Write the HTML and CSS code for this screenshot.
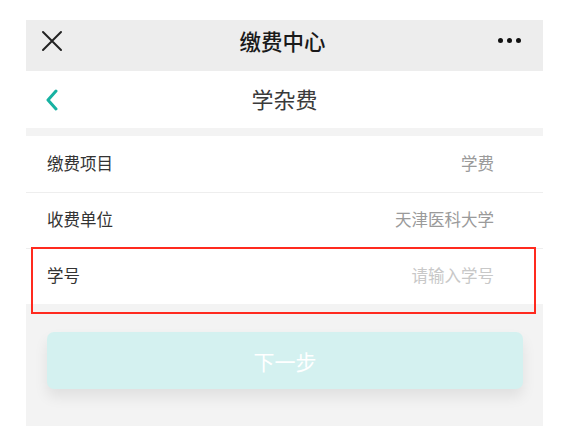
FILE: index.html
```html
<!DOCTYPE html>
<html lang="zh">
<head>
<meta charset="utf-8">
<title>缴费中心</title>
<link rel="stylesheet" href="styles.css">
</head>
<body>
<div class="page">
  <div class="topbar">
    <svg class="close" width="22" height="22" viewBox="0 0 22 22"><path d="M2 2 L20 20 M20 2 L2 20" stroke="#222" stroke-width="2" fill="none" stroke-linecap="round"/></svg>
    <div class="topbar-title">缴费中心</div>
    <div class="dots"><span></span><span></span><span></span></div>
  </div>
  <div class="subnav">
    <svg class="back" width="14" height="22" viewBox="0 0 14 22"><path d="M11 2 L3 11 L11 20" stroke="#17b2a2" stroke-width="3" fill="none" stroke-linecap="round" stroke-linejoin="round"/></svg>
    <div class="subnav-title">学杂费</div>
  </div>
  <div class="list">
    <div class="row">
      <span class="label">缴费项目</span>
      <span class="value">学费</span>
    </div>
    <div class="row">
      <span class="label">收费单位</span>
      <span class="value">天津医科大学</span>
    </div>
    <div class="row row-marked">
      <span class="label">学号</span>
      <span class="value placeholder">请输入学号</span>
    </div>
  </div>
  <div class="actions">
    <button class="next">下一步</button>
  </div>
</div>
</body>
</html>
```

FILE: styles.css
```css
* { box-sizing: border-box; }
body {
  margin: 0;
  background: #ffffff;
  font-family: "Noto Sans CJK SC", "Noto Sans", sans-serif;
}
.page {
  margin: 20px 21px 11px 26px;
  background: #f3f3f3;
}
.topbar {
  height: 51px;
  background: #ededed;
  display: flex;
  align-items: center;
  justify-content: space-between;
  padding: 0 22px 10px 15px;
}
.topbar-title {
  font-size: 21.5px;
  font-weight: 500;
  color: #1a1a1a;
  margin-left: 4px;
}
.dots {
  display: flex;
  gap: 4px;
}
.dots span {
  width: 5px;
  height: 5px;
  border-radius: 50%;
  background: #111;
}
.subnav {
  height: 57px;
  background: #fff;
  display: flex;
  align-items: center;
  padding-left: 19px;
}
.subnav-title {
  flex: 1;
  text-align: center;
  font-size: 22px;
  color: #3a3a3a;
  margin-right: 33px;
  margin-top: -3px;
}
.list {
  margin-top: 8px;
  background: #fff;
}
.row {
  height: 56px;
  display: flex;
  align-items: center;
  justify-content: space-between;
  padding: 0 49px 3px 21px;
  border-top: 1px solid #eeeeee;
}
.row:first-child { border-top: none; }
.label {
  font-size: 16.5px;
  color: #333;
}
.value {
  font-size: 16.5px;
  color: #9a9a9a;
}
.placeholder { color: #c8c8c8; }
.row-marked { position: relative; }
.row-marked::after {
  content: "";
  position: absolute;
  left: 5px;
  right: 7px;
  top: -2px;
  bottom: -10px;
  border: 2px solid #ff2a1f;
}
.actions {
  padding: 28px 20px 37px 21px;
}
.next {
  display: block;
  width: 100%;
  height: 57px;
  border: none;
  border-radius: 7px;
  background: #d4f1f0;
  color: #ffffff;
  font-family: "Noto Sans CJK SC", sans-serif;
  font-size: 21px;
  box-shadow: 0 8px 14px rgba(0, 0, 0, 0.08);
}
```
